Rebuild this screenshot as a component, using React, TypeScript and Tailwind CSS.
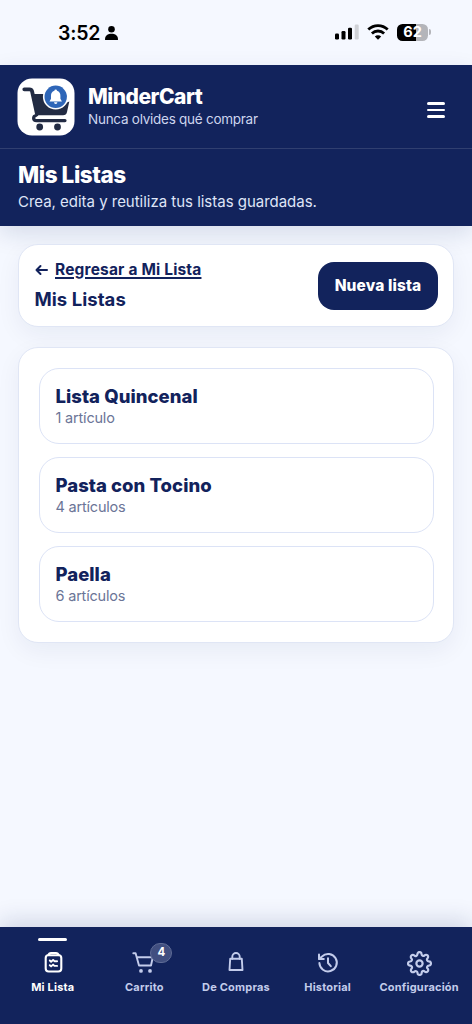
import { useState } from 'react';
import type { ReactNode } from 'react';
import { FiSettings } from 'react-icons/fi';

type SavedList = {
  id: number;
  name: string;
  itemCount: number;
};

type NavItem = {
  label: string;
  icon: ReactNode;
  badge?: number;
};

const savedLists: SavedList[] = [
  { id: 1, name: 'Lista Quincenal', itemCount: 1 },
  { id: 2, name: 'Pasta con Tocino', itemCount: 4 },
  { id: 3, name: 'Paella', itemCount: 6 },
];

const ListIcon = () => (
  <svg width="24" height="24" viewBox="0 0 24 24" fill="none" stroke="currentColor" strokeWidth="2.100" strokeLinecap="round" strokeLinejoin="round">
    <path d="M7.400 4A3 3 0 0 0 4.700 7V17.500A3 3 0 0 0 7.700 20.500H17.300A3 3 0 0 0 20.300 17.500V7A3 3 0 0 0 17.600 4" />
    <path d="M7.400 4.200C7.800 2.500 8.800 2 10 2H15C16.200 2 17.200 2.500 17.600 4.200Z" />
    <path d="M8.800 9.500l1.300 1.200 2-1.800 1.300 1.300h2.700M8.800 14.200l1.300 1.200 2-1.800 1.300 1.300h2.700" strokeWidth="1.900" />
  </svg>
);

const CartIcon = () => (
  <svg width="24" height="24" viewBox="0 0 24 24" fill="none" stroke="currentColor" strokeWidth="1.900" strokeLinecap="round" strokeLinejoin="round">
    <path d="M1.300 2.300H3.600L7 14.500H19L20.800 6.200H4.800" />
    <circle cx="9" cy="19.900" r="1.900" fill="currentColor" stroke="none" />
    <circle cx="18" cy="19.900" r="1.900" fill="currentColor" stroke="none" />
  </svg>
);

const BagIcon = () => (
  <svg width="24" height="24" viewBox="0 0 24 24" fill="none" stroke="currentColor" strokeWidth="1.900" strokeLinecap="round" strokeLinejoin="round">
    <path d="M6.200 7.700H17.800L18.500 19H5.500Z" />
    <path d="M8.300 7.700V5.700a3.700 3.700 0 0 1 7.400 0V7.700" />
  </svg>
);

const HistoryIcon = () => (
  <svg width="24" height="24" viewBox="0 0 24 24" fill="none" stroke="currentColor" strokeWidth="2" strokeLinecap="round" strokeLinejoin="round">
    <path d="M3.400 12A8.700 8.700 0 1 0 6 5.500L3.200 8" />
    <path d="M3 3.500V8H7.800" />
    <path d="M12 7.300V12L14.800 15.200" />
  </svg>
);

const navItems: NavItem[] = [
  { label: 'Mi Lista', icon: <ListIcon /> },
  { label: 'Carrito', icon: <CartIcon />, badge: 4 },
  { label: 'De Compras', icon: <BagIcon /> },
  { label: 'Historial', icon: <HistoryIcon /> },
  { label: 'Configuración', icon: <FiSettings size={25} strokeWidth={2.1} /> },
];

const Logo = () => (
  <svg width="58" height="58" viewBox="0 0 58 58" className="shrink-0">
    <rect x="0.500" y="0.500" width="57" height="57" rx="14.500" fill="#fff" />
    <path d="M7.300 11.300H12.500Q14.500 11.300 15 13L20 36" fill="none" stroke="#222b43" strokeWidth="3.800" strokeLinecap="round" strokeLinejoin="round" />
    <path d="M15 16H30L46 26L52.300 23.500L50 34Q49.300 37.300 46 37.300H19.500Z" fill="#222b43" />
    <path d="M19.500 37.500C15.500 38 15.800 42.600 19.500 42.600H48" fill="none" stroke="#222b43" strokeWidth="3.200" strokeLinecap="round" />
    <path d="M20.500 39.400H48" stroke="#fff" strokeWidth="2.200" strokeLinecap="round" />
    <circle cx="22.700" cy="49" r="3.400" fill="#222b43" />
    <circle cx="40.500" cy="49" r="3.400" fill="#222b43" />
    <circle cx="38.700" cy="18.800" r="12.800" fill="#fff" />
    <circle cx="38.700" cy="18.800" r="11.200" fill="#2e66b8" />
    <path d="M38.700 11.400a1.300 1.300 0 0 1 1.300 1.300C42.500 13.500 43.400 15.300 43.400 17.800V20.800L44.900 23.400H32.500L34 20.800V17.800C34 15.300 34.900 13.500 37.400 12.700A1.300 1.300 0 0 1 38.700 11.400Z" fill="#fff" />
    <path d="M37 24.300H40.400A1.700 1.700 0 0 1 37 24.300Z" fill="#fff" />
  </svg>
);

const StatusBar = () => (
  <div className="flex h-[65px] items-start justify-between pl-[58px] pr-[41px] text-black">
    <div className="mt-[21px] flex h-6 items-center gap-[5px]">
      <span className="text-[19.500px] font-semibold leading-6 tracking-[-0.200px]">3:52</span>
      <svg width="13" height="14" viewBox="0 0 13 14" fill="currentColor">
        <circle cx="6.500" cy="3.300" r="3.300" />
        <path d="M0 13.500C0 9.500 3 7.800 6.500 7.800S13 9.500 13 13.500Q13 14 12.400 14H.6Q0 14 0 13.500Z" />
      </svg>
    </div>
    <div className="mt-[23px] flex h-[18px] items-center">
      <svg width="24" height="16" viewBox="0 0 24 16" fill="currentColor">
        <rect x="0" y="9.500" width="4" height="6" rx="1.200" />
        <rect x="6.500" y="7" width="4" height="8.500" rx="1.200" />
        <rect x="13" y="3.700" width="4" height="11.800" rx="1.200" />
        <rect x="19.700" y="0.500" width="4" height="15" rx="1.200" fill="#cfd1d6" />
      </svg>
      <svg width="22" height="16" viewBox="0 0 22 16" fill="none" stroke="currentColor" strokeWidth="2.800" className="ml-2">
        <path d="M1.300 5.600C6.800.3 15.200.3 20.700 5.600" />
        <path d="M4.900 9.400C8.300 6.200 13.700 6.200 17.100 9.400" />
        <path d="M11 15.700L7.800 12.500C9.500 10.900 12.500 10.900 14.200 12.500Z" fill="currentColor" stroke="none" />
      </svg>
      <div className="ml-2 flex items-center gap-px">
        <div className="flex h-[17px] w-[31px] items-center justify-center rounded-[5.500px] bg-[linear-gradient(90deg,#000_62%,#b4b5ba_62%)] text-[14.500px] font-bold leading-none text-white">
          62
        </div>
        <div className="h-[6px] w-[2px] rounded-r-full bg-[#b4b5ba]" />
      </div>
    </div>
  </div>
);

const ListCard = ({ list }: { list: SavedList }) => (
  <button className="flex h-[76px] w-full flex-col items-start rounded-[20px] border border-[#dce3f6] bg-white pl-4 pt-[15px] text-left">
    <span className="text-[18.500px] font-extrabold leading-6 tracking-[0.040px] text-[#12225c]">{list.name}</span>
    <span className="text-[14.500px] leading-[19px] tracking-[-0.200px] text-[#6b7597]">
      {list.itemCount} {list.itemCount === 1 ? 'artículo' : 'artículos'}
    </span>
  </button>
);

export default function App() {
  const [activeTab, setActiveTab] = useState('Mi Lista');

  return (
    <div className="flex h-[1024px] w-[472px] flex-col overflow-hidden bg-[#f5f8ff] font-['Inter','Liberation_Sans',sans-serif]">
      <StatusBar />

      {/* Header */}
      <header className="h-[161px] shrink-0 bg-[#12235c] text-white shadow-[0_8px_22px_rgba(18,35,92,0.130)]">
        <div className="flex h-[84px] items-center border-b border-[#303f70] pl-[17px] pr-[27px]">
          <Logo />
          <div className="-mt-[2px] ml-[13px] flex-1">
            <h1 className="pt-px text-[21px] font-extrabold leading-[26px] tracking-[-0.500px]">MinderCart</h1>
            <p className="-mt-px text-[13.500px] leading-5 tracking-[-0.260px] text-[#cdd5ee]">Nunca olvides qué comprar</p>
          </div>
          <button aria-label="Menú" className="mt-[7px] flex flex-col gap-[4px]">
            <span className="h-[2.500px] w-[18px] rounded-full bg-white" />
            <span className="h-[2.500px] w-[18px] rounded-full bg-white" />
            <span className="h-[2.500px] w-[18px] rounded-full bg-white" />
          </button>
        </div>
        <div className="pl-[18px] pt-3">
          <h2 className="text-[22.500px] font-extrabold leading-7 tracking-[-0.450px]">Mis Listas</h2>
          <p className="mt-[2px] text-[15px] leading-[22px] tracking-[-0.020px] text-[#dfe5f7]">Crea, edita y reutiliza tus listas guardadas.</p>
        </div>
      </header>

      <main className="flex flex-1 flex-col gap-5 px-[18px] pt-[18px]">
        <section className="flex h-[83px] items-center justify-between rounded-[20px] border border-[#e0e6f5] bg-white pl-[15.500px] pr-[15px] shadow-[0_8px_24px_rgba(18,35,92,0.060)]">
          <div className="mb-[3px] text-[#12225c]">
            <a href="#" className="flex items-center gap-[7.500px] text-[15.500px] font-bold leading-6 tracking-[0.170px]">
              <svg width="13" height="12" viewBox="0 0 13 12" fill="none" stroke="currentColor" strokeWidth="2" strokeLinecap="round" strokeLinejoin="round">
                <path d="M12 6H1.500M5.500 2L1.500 6L5.500 10" />
              </svg>
              <span className="underline decoration-[1.500px] underline-offset-2">Regresar a Mi Lista</span>
            </a>
            <h3 className="mt-[5px] text-[18.500px] font-bold leading-6 tracking-[0.050px]">Mis Listas</h3>
          </div>
          <button className="h-12 w-[120px] rounded-2xl bg-[#12235c] pt-px text-[15.500px] font-extrabold tracking-[0.120px] text-white">Nueva lista</button>
        </section>

        <section className="flex flex-col gap-[13px] rounded-[20px] border border-[#e0e6f5] bg-white px-[19.500px] py-5 shadow-[0_8px_24px_rgba(18,35,92,0.060)]">
          {savedLists.map((list) => (
            <ListCard key={list.id} list={list} />
          ))}
        </section>
      </main>

      {/* Bottom navigation */}
      <nav className="grid h-[97px] shrink-0 grid-cols-5 bg-[#12235c] px-[7px] shadow-[0_-6px_22px_rgba(18,35,92,0.160)]">
        {navItems.map((item) => {
          const active = item.label === activeTab;
          return (
            <button
              key={item.label}
              onClick={() => setActiveTab(item.label)}
              className={`flex flex-col items-center pt-[11px] ${active ? 'text-white' : 'text-[#c3cceb]'}`}
            >
              <span className={`h-[3px] w-[29px] rounded-full ${active ? 'bg-white' : 'bg-transparent'}`} />
              <span className="relative mt-[9px] flex h-[26px] items-center">
                {item.icon}
                {item.badge && (
                  <span className="absolute -top-[7px] left-[18px] flex h-5 w-[22px] items-center justify-center rounded-full border border-[#5f6c96] bg-[#414f80] text-[11.500px] font-bold leading-none text-white">
                    {item.badge}
                  </span>
                )}
              </span>
              <span className="mt-[3px] whitespace-nowrap text-[11px] font-bold leading-4 tracking-[0.200px]">{item.label}</span>
            </button>
          );
        })}
      </nav>
    </div>
  );
}
